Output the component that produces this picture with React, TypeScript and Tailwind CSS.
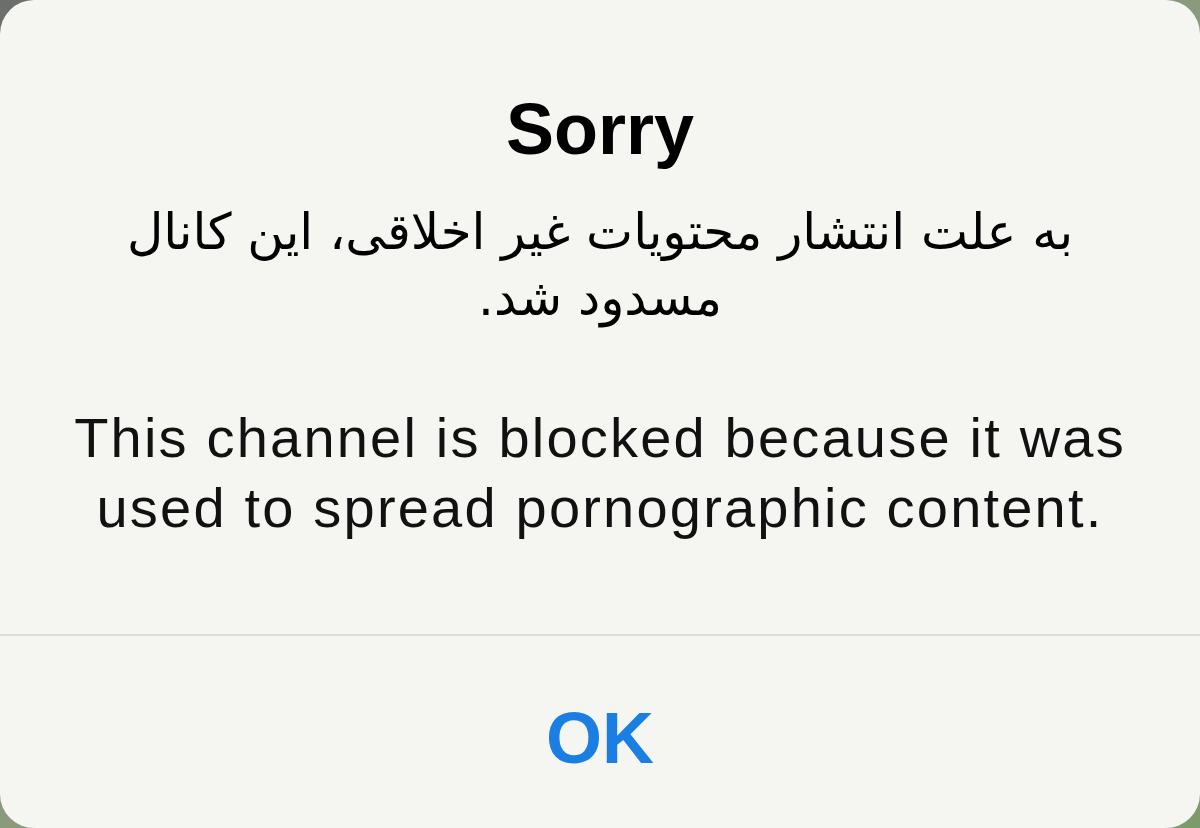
import React from "react";

export default function App() {
  return (
    <div className="w-[1200px] h-[828px] bg-gradient-to-br from-[#6b6e6a] via-[#8a9a7c] to-[#7d9a6c] overflow-hidden">
      <div className="w-full h-full bg-[#f5f5f1] rounded-[34px] flex flex-col" style={{ fontFamily: '"Liberation Sans", Arial, sans-serif' }}>
        {/* message */}
        <div className="h-[634px] flex flex-col items-center pt-[92px] text-black">
          <h1 className="text-[72px] font-bold leading-[74px]">Sorry</h1>
          <p
            dir="rtl"
            className="mt-[33px] w-[1000px] text-center text-[50px] leading-[66px]"
            style={{ fontFamily: '"DejaVu Sans", sans-serif' }}
          >
            به علت انتشار محتویات غیر اخلاقی، این کانال مسدود شد.
          </p>
          <p className="mt-[72px] w-[1100px] text-center text-[56px] leading-[70px] tracking-[2.2px] text-[#111]">
            This channel is blocked because it was used to spread pornographic content.
          </p>
        </div>
        <div className="h-[2px] bg-[#dcdcd8]" />
        {/* action */}
        <div className="flex-1 flex items-center justify-center pt-[12px]">
          <button className="text-[72px] font-bold leading-none text-[#1a7ee3]">OK</button>
        </div>
      </div>
    </div>
  );
}
